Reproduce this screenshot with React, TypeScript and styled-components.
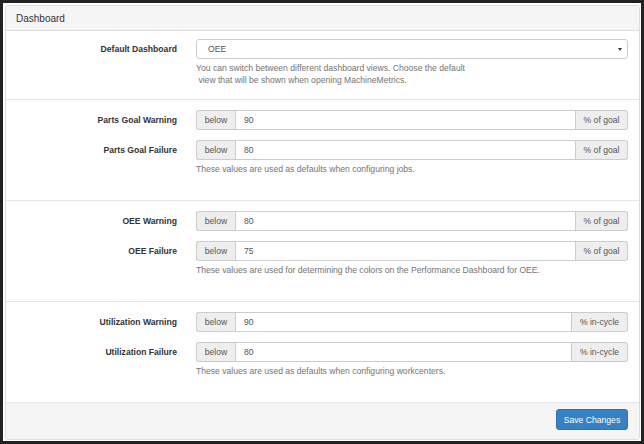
import React from "react";
import styled, { createGlobalStyle } from "styled-components";

const GlobalStyle = createGlobalStyle`
	html, body {
		margin: 0;
		padding: 0;
		background: #222222;
	}
	body {
		font-family: "Liberation Sans", Arial, Helvetica, sans-serif;
		color: #333333;
	}
`;

// white sheet inside the dark frame of the screenshot
const Frame = styled.div`
	margin: 3px;
	height: 438px;
	box-sizing: border-box;
	padding: 2px 1px 1px 2px;
	background: #ffffff;
`;

const Panel = styled.div`
	height: 100%;
	box-sizing: border-box;
	border: 1px solid #dddddd;
	border-radius: 3px;
	display: flex;
	flex-direction: column;
	overflow: hidden;
`;

const PanelHeading = styled.div`
	height: 24px;
	display: flex;
	align-items: center;
	padding-left: 10px;
	background: #f5f5f5;
	border-bottom: 1px solid #dddddd;
	font-size: 10px;
	color: #333333;
`;

const Section = styled.div<{ $top?: number; $bottom?: number }>`
	padding: ${(p) => p.$top ?? 10}px 11px ${(p) => p.$bottom ?? 25}px 0;
	border-bottom: 1px solid #e5e5e5;
	display: flex;
	flex-direction: column;
	gap: 10px;
`;

const FieldRow = styled.div`
	display: grid;
	grid-template-columns: 190px 1fr;
	align-items: start;
`;

const Label = styled.label`
	text-align: right;
	padding-right: 19px;
	line-height: 20px;
	font-size: 8.6px;
	font-weight: bold;
	color: #333333;
`;

const Control = styled.div`
	display: flex;
	flex-direction: column;
`;

const InputGroup = styled.div`
	display: flex;
	height: 20px;
`;

const Addon = styled.span<{ $side: "left" | "right"; $width: number }>`
	width: ${(p) => p.$width}px;
	box-sizing: border-box;
	display: flex;
	align-items: center;
	justify-content: center;
	background: #eeeeee;
	border: 1px solid #cccccc;
	${(p) =>
		p.$side === "left"
			? "border-right: none; border-radius: 3px 0 0 3px;"
			: "border-left: none; border-radius: 0 3px 3px 0;"}
	font-size: 8.6px;
	color: #555555;
`;

const TextInput = styled.input`
	flex: 1;
	min-width: 0;
	box-sizing: border-box;
	height: 20px;
	margin: 0;
	padding: 0 8px;
	border: 1px solid #cccccc;
	font-family: inherit;
	font-size: 8.6px;
	color: #555555;
	background: #ffffff;
	outline: none;
`;

const SelectBox = styled.div`
	height: 20px;
	box-sizing: border-box;
	display: flex;
	align-items: center;
	justify-content: space-between;
	padding: 0 4px 0 11px;
	border: 1px solid #cccccc;
	border-radius: 3px;
	background: #ffffff;
	font-size: 8.6px;
	color: #555555;
`;

const Caret = styled.span`
	width: 0;
	height: 0;
	margin-right: 1px;
	border-left: 2.5px solid transparent;
	border-right: 2.5px solid transparent;
	border-top: 3px solid #333333;
`;

const HelpText = styled.p`
	margin: 3px 0 0;
	font-size: 8.6px;
	line-height: 12px;
	color: #737373;
`;

const Footer = styled.div`
	flex: 1;
	display: flex;
	justify-content: flex-end;
	align-items: flex-start;
	padding: 6px 11px 0 0;
	background: #f5f5f5;
`;

const PrimaryButton = styled.button`
	width: 72px;
	height: 21px;
	padding: 0;
	border: 1px solid #2e73ae;
	border-radius: 3px;
	background: #3581c3;
	color: #ffffff;
	font-family: inherit;
	font-size: 8.6px;
	cursor: pointer;
`;

interface Threshold {
	label: string;
	value: string;
}

interface ThresholdGroup {
	unit: string;
	unitWidth: number;
	rows: Threshold[];
	help: string;
}

const groups: ThresholdGroup[] = [
	{
		unit: "% of goal",
		unitWidth: 52,
		rows: [
			{ label: "Parts Goal Warning", value: "90" },
			{ label: "Parts Goal Failure", value: "80" },
		],
		help: "These values are used as defaults when configuring jobs.",
	},
	{
		unit: "% of goal",
		unitWidth: 52,
		rows: [
			{ label: "OEE Warning", value: "80" },
			{ label: "OEE Failure", value: "75" },
		],
		help: "These values are used for determining the colors on the Performance Dashboard for OEE.",
	},
	{
		unit: "% in-cycle",
		unitWidth: 56,
		rows: [
			{ label: "Utilization Warning", value: "90" },
			{ label: "Utilization Failure", value: "80" },
		],
		help: "These values are used as defaults when configuring workcenters.",
	},
];

const ThresholdSection = ({ group }: { group: ThresholdGroup }) => (
	<Section>
		{group.rows.map((row, i) => (
			<FieldRow key={row.label}>
				<Label>{row.label}</Label>
				<Control>
					<InputGroup>
						<Addon $side='left' $width={39}>
							below
						</Addon>
						<TextInput defaultValue={row.value} />
						<Addon $side='right' $width={group.unitWidth}>
							{group.unit}
						</Addon>
					</InputGroup>
					{/* help sits under the last row of the group */}
					{i === group.rows.length - 1 && <HelpText>{group.help}</HelpText>}
				</Control>
			</FieldRow>
		))}
	</Section>
);

const App = () => {
	return (
		<>
			<GlobalStyle />
			<Frame>
				<Panel>
					<PanelHeading>Dashboard</PanelHeading>
					<Section $top={8} $bottom={13}>
						<FieldRow>
							<Label>Default Dashboard</Label>
							<Control>
								<SelectBox>
									OEE
									<Caret />
								</SelectBox>
								<HelpText>
									You can switch between different dashboard views. Choose the default
									<br />
									{"\u00a0"}view that will be shown when opening MachineMetrics.
								</HelpText>
							</Control>
						</FieldRow>
					</Section>
					{groups.map((g) => (
						<ThresholdSection key={g.rows[0].label} group={g} />
					))}
					<Footer>
						<PrimaryButton>Save Changes</PrimaryButton>
					</Footer>
				</Panel>
			</Frame>
		</>
	);
};

export default App;
